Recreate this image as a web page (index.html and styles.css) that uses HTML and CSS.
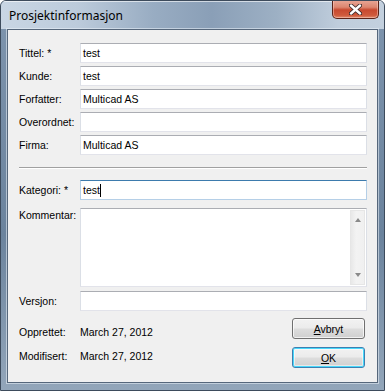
FILE: index.html
```html
<!DOCTYPE html>
<html lang="no">
<head>
  <meta charset="UTF-8">
  <title>Prosjektinformasjon</title>
  <link rel="stylesheet" href="styles.css">
</head>
<body>
  <div class="window">
    <div class="titlebar">
      <span class="title">Prosjektinformasjon</span>
      <div class="close-btn">
        <svg width="13" height="11" viewBox="0 0 13 11">
          <path d="M2 1.5 L11 9.5 M11 1.5 L2 9.5" stroke="#3b2a2a" stroke-width="4.2" stroke-linecap="round"/>
          <path d="M2 1.5 L11 9.5 M11 1.5 L2 9.5" stroke="#ffffff" stroke-width="2.4" stroke-linecap="round"/>
        </svg>
      </div>
    </div>

    <div class="frame">
      <div class="client">
        <div class="rows">
          <div class="row"><span class="label">Tittel: *</span><div class="textbox">test</div></div>
          <div class="row"><span class="label">Kunde:</span><div class="textbox">test</div></div>
          <div class="row"><span class="label">Forfatter:</span><div class="textbox">Multicad AS</div></div>
          <div class="row"><span class="label">Overordnet:</span><div class="textbox"></div></div>
          <div class="row"><span class="label">Firma:</span><div class="textbox">Multicad AS</div></div>
        </div>

        <div class="separator"></div>

        <div class="row"><span class="label">Kategori: *</span><div class="textbox focused">test<span class="caret"></span></div></div>

        <div class="row top comment-row">
          <span class="label">Kommentar:</span>
          <div class="textbox textarea">
            <div class="textarea-body"></div>
            <div class="scrollbar">
              <span class="arrow up"></span>
              <span class="arrow down"></span>
            </div>
          </div>
        </div>

        <div class="row"><span class="label">Versjon:</span><div class="textbox"></div></div>

        <div class="footer">
          <div class="info">
            <div class="info-row"><span class="label">Opprettet:</span><span class="value">March 27, 2012</span></div>
            <div class="info-row"><span class="label">Modifisert:</span><span class="value">March 27, 2012</span></div>
          </div>
          <div class="buttons">
            <button class="btn"><u>A</u>vbryt</button>
            <button class="btn default"><u>O</u>K</button>
          </div>
        </div>
      </div>
    </div>
  </div>
</body>
</html>
```

FILE: styles.css
```css
body {
  margin: 0;
  background: #ffffff;
  font-family: "Liberation Sans", Arial, sans-serif;
  font-size: 10.5px;
  color: #000;
}

.window {
  width: 385px;
  height: 391px;
  box-sizing: border-box;
  display: flex;
  flex-direction: column;
  border: 1px solid #3d4b5c;
  border-radius: 6px 6px 0 0;
  overflow: hidden;
  background: linear-gradient(180deg, #7f95ae 0%, #6b839d 60%, #93a6ba 100%);
}

.titlebar {
  height: 28px;
  display: flex;
  justify-content: space-between;
  align-items: flex-start;
  padding: 0 5px 0 8px;
  background: linear-gradient(90deg, #c9d6e4 0%, #bccbdb 20%, #98acc2 40%, #8a9fb7 55%, #9db0c4 72%, #bfcddc 88%, #c3d0de 100%);
  box-shadow: inset 0 1px 0 rgba(255, 255, 255, 0.6);
}

.title {
  font-family: "Segoe UI", "Noto Sans", sans-serif;
  font-size: 12px;
  line-height: 16px;
  margin-top: 7px;
  color: #000;
}

.close-btn {
  width: 45px;
  height: 18px;
  margin-top: -1px;
  display: flex;
  align-items: center;
  justify-content: center;
  border: 1px solid #5b2318;
  border-top: none;
  border-radius: 0 0 5px 5px;
  background: linear-gradient(180deg, #e9a898 0%, #dc8670 40%, #c8492f 55%, #cf5a3c 85%, #e08a6c 100%);
  box-shadow: inset 0 0 0 1px rgba(255, 220, 210, 0.45);
}

.frame {
  flex: 1;
  padding: 0 6px 7px 6px;
}

.client {
  height: 100%;
  box-sizing: border-box;
  background: #f0f0f0;
  border: 1px solid #56677b;
  box-shadow: 0 0 0 1px rgba(235, 242, 250, 0.55);
  padding: 13px 10px 0 11px;
}

.rows {
  display: flex;
  flex-direction: column;
  gap: 3px;
}

.row {
  display: grid;
  grid-template-columns: 61px 1fr;
  align-items: center;
}

.row.top {
  align-items: start;
}

.label {
  line-height: 14px;
}

.textbox {
  height: 20px;
  box-sizing: border-box;
  background: #ffffff;
  border: 1px solid #e2e3ea;
  border-top-color: #abadb3;
  border-left-color: #dbdfe6;
  border-right-color: #dbdfe6;
  padding-left: 2px;
  line-height: 18px;
  display: flex;
  align-items: center;
}

.textbox.focused {
  border-color: #b5cfe7;
  border-top-color: #3d7bad;
}

.caret {
  display: inline-block;
  width: 1px;
  height: 13px;
  background: #000;
}

.separator {
  height: 1px;
  background: #a0a0a0;
  border-bottom: 1px solid #ffffff;
  margin: 12px 0 11px 0;
}

.comment-row {
  margin-top: 8px;
}

.textarea {
  height: 79px;
  padding: 1px 1px 1px 0;
  align-items: stretch;
}

.textarea-body {
  flex: 1;
}

.scrollbar {
  width: 15px;
  box-sizing: border-box;
  border: 1px solid #e6e6e6;
  background: linear-gradient(90deg, #e8e8e8, #f3f3f3 40%, #f0f0f0);
  display: flex;
  flex-direction: column;
  justify-content: space-between;
  align-items: center;
  padding: 7px 0 7px 0;
}

.arrow {
  width: 0;
  height: 0;
  border-left: 3.5px solid transparent;
  border-right: 3.5px solid transparent;
}

.arrow.up {
  border-bottom: 4px solid #8a8a8a;
}

.arrow.down {
  border-top: 4px solid #8a8a8a;
}

.comment-row + .row {
  margin-top: 4px;
}

.footer {
  display: flex;
  justify-content: space-between;
}

.info {
  padding-top: 9px;
}

.info-row {
  display: grid;
  grid-template-columns: 61px 1fr;
  line-height: 24px;
}

.info-row .label {
  line-height: 24px;
}

.buttons {
  display: flex;
  flex-direction: column;
  gap: 8px;
  margin-top: 7px;
  margin-right: 2px;
}

.btn {
  width: 73px;
  height: 21px;
  padding: 0;
  font-family: "Liberation Sans", Arial, sans-serif;
  font-size: 10.5px;
  color: #000;
  border: 1px solid #707070;
  border-radius: 3px;
  background: linear-gradient(180deg, #f2f2f2 0%, #ebebeb 48%, #dddddd 52%, #cfcfcf 100%);
  box-shadow: inset 0 0 0 1px rgba(255, 255, 255, 0.7);
}

.btn.default {
  border-color: #3c7fb1;
  box-shadow: inset 0 0 0 1px #48d8fb, inset 0 0 0 2px rgba(255, 255, 255, 0.5);
}
```
